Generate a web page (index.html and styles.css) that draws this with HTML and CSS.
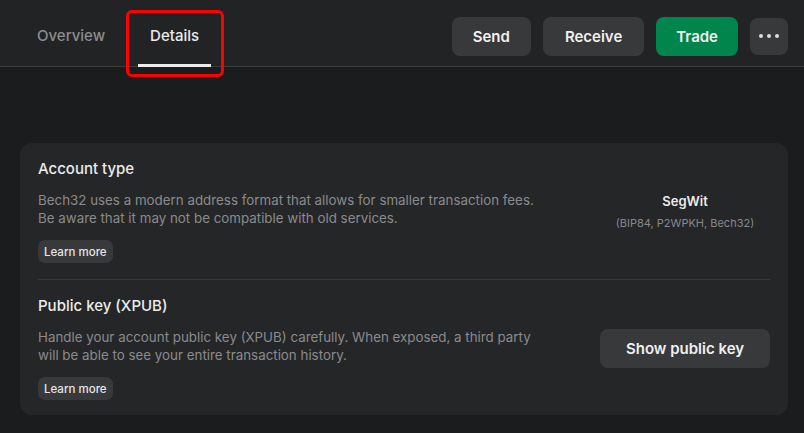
FILE: index.html
```html
<!DOCTYPE html>
<html>
<head>
  <meta charset="utf-8">
  <link rel="stylesheet" href="styles.css">
</head>
<body>
  <div class="header">
    <div class="tabs">
      <div class="tab">Overview</div>
      <div class="tab tab-active">Details</div>
      <div class="highlight"></div>
    </div>
    <div class="actions">
      <button class="button">Send</button>
      <button class="button button-receive">Receive</button>
      <button class="button button-green">Trade</button>
      <button class="button button-more">
        <span class="dot"></span><span class="dot"></span><span class="dot"></span>
      </button>
    </div>
  </div>

  <div class="content">
    <div class="card">
      <div class="row">
        <div class="row-main">
          <div class="row-title">Account type</div>
          <div class="row-desc">
            Bech32 uses a modern address format that allows for smaller transaction fees.<br>
            Be aware that it may not be compatible with old services.
          </div>
          <button class="pill">Learn more</button>
        </div>
        <div class="row-side">
          <div class="side-value">SegWit</div>
          <div class="side-note">(BIP84, P2WPKH, Bech32)</div>
        </div>
      </div>

      <div class="row">
        <div class="row-main">
          <div class="row-title">Public key (XPUB)</div>
          <div class="row-desc">
            Handle your account public key (XPUB) carefully. When exposed, a third party<br>
            will be able to see your entire transaction history.
          </div>
          <button class="pill">Learn more</button>
        </div>
        <div class="row-side">
          <button class="button button-wide">Show public key</button>
        </div>
      </div>
    </div>
  </div>
</body>
</html>
```

FILE: styles.css
```css
* {
  margin: 0;
  padding: 0;
  box-sizing: border-box;
}

body {
  width: 804px;
  height: 433px;
  overflow: hidden;
  font-family: Inter, 'Noto Sans', sans-serif;
  background: #1b1c1e;
  color: #e8e8e8;
}

button {
  font-family: inherit;
  border: none;
  cursor: pointer;
}

.header {
  height: 67px;
  display: flex;
  justify-content: space-between;
  background: #222325;
  border-bottom: 1px solid #3b3c3e;
  padding: 0 16px 0 25px;
}

.tabs {
  position: relative;
  display: flex;
  gap: 21px;
}

.tab {
  padding: 0 12px;
  height: 67px;
  line-height: 71px;
  font-size: 15px;
  font-weight: 500;
  color: #8c8d8f;
  border-bottom: 3px solid transparent;
  margin-bottom: -1px;
}

.tab-active {
  color: #ececec;
  border-bottom-color: #ececec;
}

.highlight {
  position: absolute;
  left: 101px;
  top: 10px;
  width: 98px;
  height: 67px;
  border: 3px solid #ff0000;
  border-radius: 6px;
}

.actions {
  display: flex;
  align-items: center;
  gap: 12px;
  padding-top: 6px;
}

.button {
  height: 39px;
  padding: 0 21px;
  border-radius: 8px;
  background: #38393b;
  color: #f0f0f0;
  font-size: 15px;
  font-weight: 600;
}

.button-receive {
  padding: 0 22px;
}

.button-green {
  background: #00854d;
  padding: 0 20px;
}

.button-more {
  width: 38px;
  height: 37px;
  padding: 0;
  display: flex;
  align-items: center;
  justify-content: center;
  gap: 4px;
}

.dot {
  width: 4px;
  height: 4px;
  border-radius: 50%;
  background: #dcdcdc;
}

.content {
  padding: 76px 16px 0 20px;
}

.card {
  background: #252628;
  border-radius: 12px;
  padding: 0 18px;
}

.row {
  display: flex;
  align-items: center;
  justify-content: space-between;
  padding: 16px 0;
  border-bottom: 1px solid #37383a;
}

.row:last-child {
  border-bottom: none;
  padding-bottom: 15px;
}

.row-title {
  font-size: 15px;
  line-height: 20px;
  font-weight: 500;
  color: #ececec;
}

.row-desc {
  margin-top: 12px;
  font-size: 13.35px;
  line-height: 18px;
  color: #8a8b8d;
  white-space: nowrap;
}

.pill {
  margin-top: 13px;
  height: 23px;
  padding: 0 6px;
  border-radius: 7px;
  background: #38393b;
  color: #e6e6e6;
  font-size: 11.5px;
  font-weight: 500;
}

.row-side {
  width: 170px;
  text-align: center;
}

.side-value {
  font-size: 13px;
  font-weight: 600;
  color: #ececec;
  line-height: 18px;
}

.side-note {
  margin-top: 6px;
  font-size: 11px;
  color: #87888a;
  line-height: 14px;
}

.button-wide {
  width: 170px;
}
```
